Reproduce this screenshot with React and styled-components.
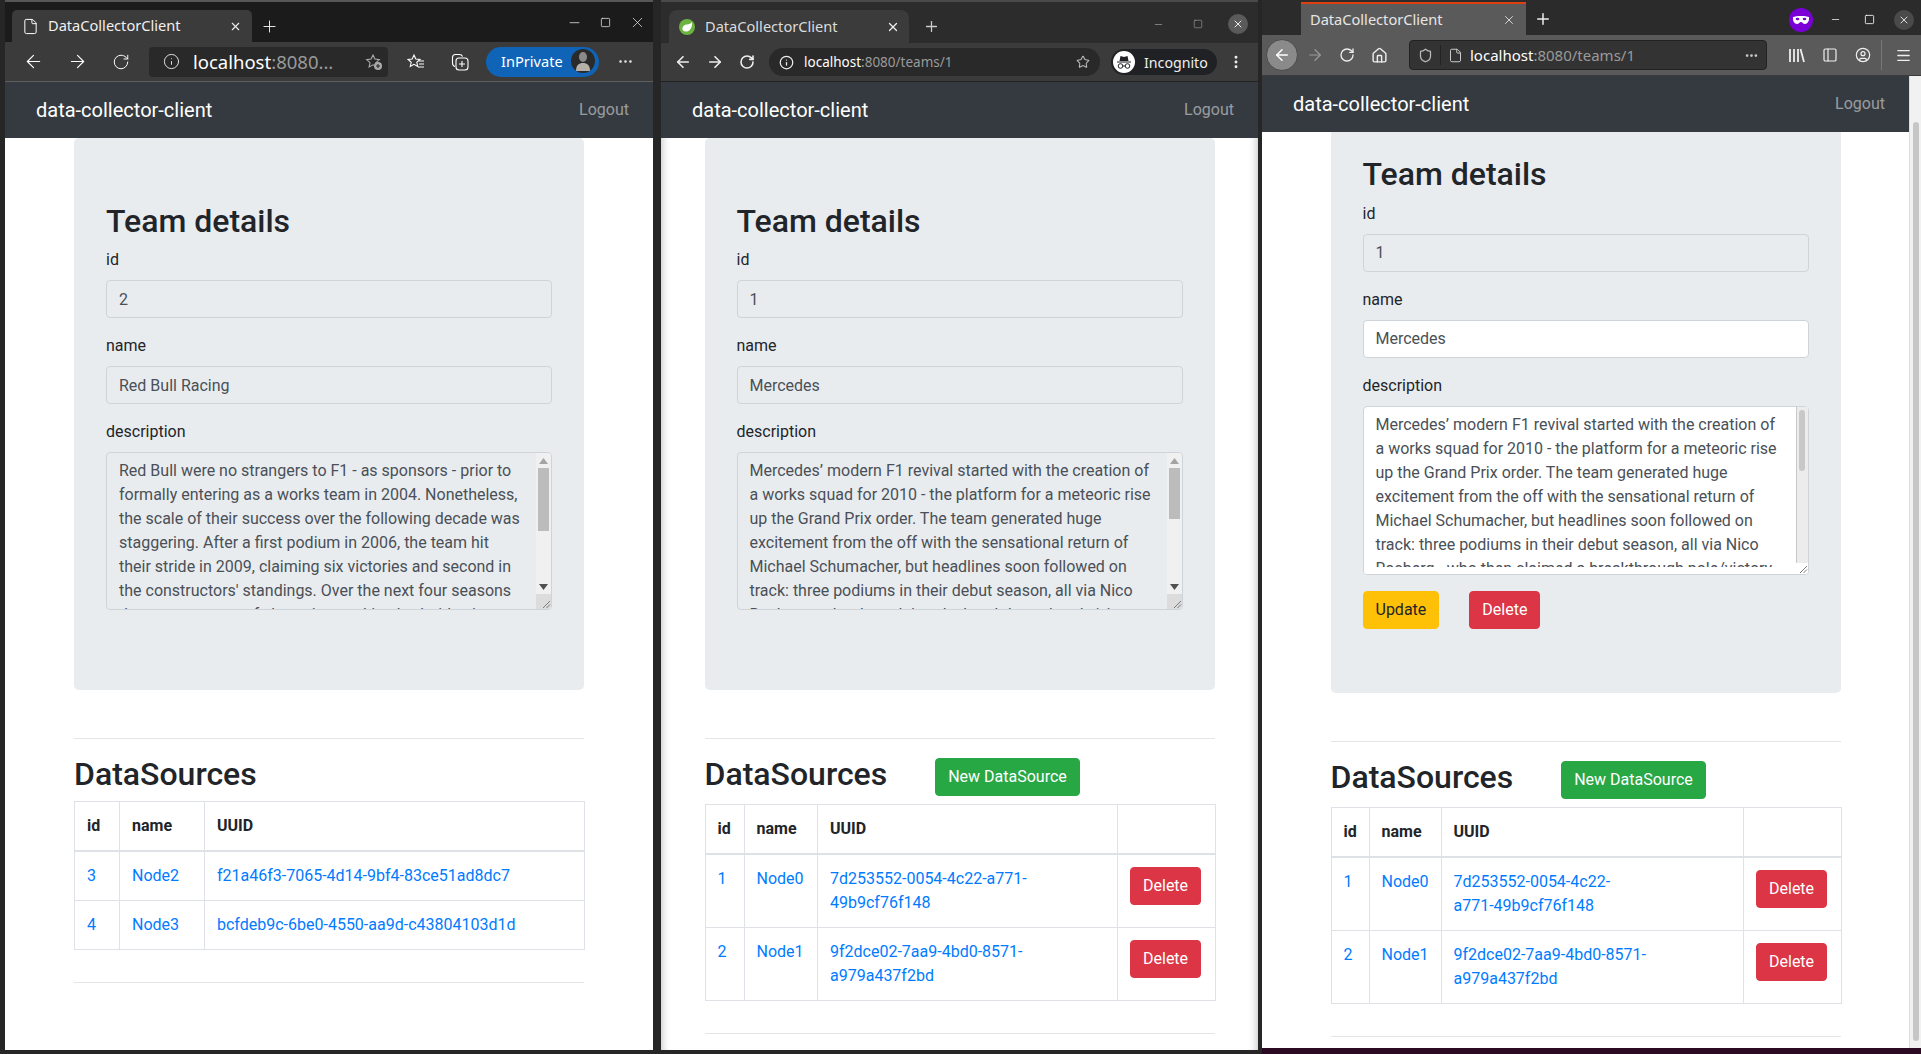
import React from 'react';
import styled, { createGlobalStyle } from 'styled-components';
import {
  ArrowLeft, ArrowRight, RotateCw, Info, Star, File, X, Plus, Minus, Square, MoreHorizontal,
  MoreVertical, Shield, Home, Menu, PanelLeft, CircleUser,
} from 'lucide-react';

const redBullText = "Red Bull were no strangers to F1 - as sponsors - prior to formally entering as a works team in 2004. Nonetheless, the scale of their success over the following decade was staggering. After a first podium in 2006, the team hit their stride in 2009, claiming six victories and second in the constructors' standings. Over the next four seasons they were a team of champions, taking both titles in every year and setting new records along the way, a run of form few teams have matched since then.";
const mercedesText = "Mercedes’ modern F1 revival started with the creation of a works squad for 2010 - the platform for a meteoric rise up the Grand Prix order. The team generated huge excitement from the off with the sensational return of Michael Schumacher, but headlines soon followed on track: three podiums in their debut season, all via Nico Rosberg - who then claimed a breakthrough pole/victory double in China in 2012, the first of many for the team. Lewis Hamilton joined a year later and the squad took a further step, winning races and starting to look like the next great force in the sport.";

const GlobalStyle = createGlobalStyle`
  html, body { margin: 0; padding: 0; background: #2c0a24; overflow: hidden; }
  * { box-sizing: border-box; }
`;

const App = () => (
  <Screen>
    <GlobalStyle />
    <Window $width={660} $pad="0 7px 4px 5px" $height={1054}>
      <EdgeChrome />
      <TeamPage
        id="2" name="Red Bull Racing" text={redBullText} topPad={63.6} thumb={63}
        cols={[45, 85, 380]}
        rows={[
          { id: 3, name: 'Node2', uuid: ['f21a46f3-7065-4d14-9bf4-83ce51ad8dc7'] },
          { id: 4, name: 'Node3', uuid: ['bcfdeb9c-6be0-4550-aa9d-c43804103d1d'] },
        ]}
      />
    </Window>
    <Window $width={602} $pad="0 4px 4px 1px" $height={1054}>
      <ChromeChrome />
      <TeamPage
        id="1" name="Mercedes" text={mercedesText} topPad={63.6} thumb={51} canCreate shaded
        cols={[39, 73.5, 300, 97.5]}
        rows={[
          { id: 1, name: 'Node0', uuid: ['7d253552-0054-4c22-a771-', '49b9cf76f148'] },
          { id: 2, name: 'Node1', uuid: ['9f2dce02-7aa9-4bd0-8571-', 'a979a437f2bd'] },
        ]}
      />
    </Window>
    <Window $width={659} $pad="0" $height={1048}>
      <FirefoxChrome />
      <PageRow>
        <TeamPage
          id="1" name="Mercedes" text={mercedesText} topPad={23.4} canCreate canEdit
          cols={[38, 72, 302.5, 97.5]}
          rows={[
            { id: 1, name: 'Node0', uuid: ['7d253552-0054-4c22-', 'a771-49b9cf76f148'] },
            { id: 2, name: 'Node1', uuid: ['9f2dce02-7aa9-4bd0-8571-', 'a979a437f2bd'] },
          ]}
        />
        <PageScrollbar><PageThumb /></PageScrollbar>
      </PageRow>
    </Window>
  </Screen>
);

const TeamPage = ({ id, name, text, topPad, thumb, cols, rows, canCreate, canEdit, shaded }) => (
  <Page $shaded={shaded}>
    <Navbar>
      <Brand>data-collector-client</Brand>
      <NavLink>Logout</NavLink>
    </Navbar>
    <Container>
      <Jumbotron $top={topPad} $flat={canEdit}>
        <Heading>Team details</Heading>
        <Form>
          <FormGroup>
            <Label>id</Label>
            <Input readOnly value={id} />
          </FormGroup>
          <FormGroup>
            <Label>name</Label>
            <Input readOnly={!canEdit} $editable={canEdit} value={name} onChange={() => {}} />
          </FormGroup>
          <FormGroup>
            <Label>description</Label>
            <TextAreaFrame>
              <TextArea
                readOnly={!canEdit} $editable={canEdit} $height={canEdit ? 169 : 158}
                value={text} onChange={() => {}}
              />
              {canEdit ? <SlimScrollbar /> : <ClassicScrollbar thumb={thumb} />}
            </TextAreaFrame>
          </FormGroup>
          {canEdit && (
            <Actions>
              <Button $kind="warning">Update</Button>
              <Button $kind="danger">Delete</Button>
            </Actions>
          )}
        </Form>
      </Jumbotron>
      <Rule />
      <SectionHead>
        <Heading>DataSources</Heading>
        {canCreate && <NewButton $kind="success">New DataSource</NewButton>}
      </SectionHead>
      <Table>
        <colgroup>
          {cols.map((w, i) => <Col key={i} $w={w} />)}
        </colgroup>
        <thead>
          <tr>
            <Th>id</Th>
            <Th>name</Th>
            <Th>UUID</Th>
            {canCreate && <Th />}
          </tr>
        </thead>
        <tbody>
          {rows.map((r) => (
            <tr key={r.id}>
              <Td><Link>{r.id}</Link></Td>
              <Td><Link>{r.name}</Link></Td>
              <Td>
                {r.uuid.map((part) => <UuidLine key={part}>{part}</UuidLine>)}
              </Td>
              {canCreate && <Td><Button $kind="danger">Delete</Button></Td>}
            </tr>
          ))}
        </tbody>
      </Table>
      <Rule />
    </Container>
  </Page>
);

// the sandbox browser hides native scrollbars, so these sit over the textarea
const ClassicScrollbar = ({ thumb }) => (
  <ClassicTrack>
    <ScrollArrow>
      <svg width="9" height="6" viewBox="0 0 9 6"><path d="M4.500 0L9 6H0z" fill="#a3a3a3" /></svg>
    </ScrollArrow>
    <ClassicThumb $h={thumb} />
    <ScrollArrow>
      <svg width="9" height="6" viewBox="0 0 9 6"><path d="M4.500 6L9 0H0z" fill="#505050" /></svg>
    </ScrollArrow>
    <GripCorner $bg="#dcdcdc" $h={15}><GripIcon /></GripCorner>
  </ClassicTrack>
);

const SlimScrollbar = () => (
  <>
    <TextClip />
    <SlimTrack>
      <SlimRail><SlimThumb /></SlimRail>
      <GripCorner $bg="#fff" $h={11}><GripIcon /></GripCorner>
    </SlimTrack>
  </>
);

const GripIcon = () => (
  <svg width="11" height="11" viewBox="0 0 11 11" fill="none" stroke="#7a7a7a" strokeWidth="1">
    <path d="M10 3L3 10M10 6.500L6.500 10" />
  </svg>
);

const EdgeChrome = () => (
  <>
    <TabBar $h={42} $bg="#1b1b1b" $line="#565656">
      <Tab $w={240} $h={32} $ml={7} $bg="#3b3b3b" $radius={5}>
        <Slot $w={36} $c="#fff"><File size={17} strokeWidth={1.4} /></Slot>
        <TabTitle $c="#f0f0f0">DataCollectorClient</TabTitle>
        <Slot $w={34} $c="#eee"><X size={13} strokeWidth={2} /></Slot>
      </Tab>
      <Slot $w={34} $h={32} $c="#eee"><Plus size={19} strokeWidth={1.2} /></Slot>
      <Controls $top={4}>
        <Slot $w={32} $h={32} $c="#999"><Minus size={15} strokeWidth={2} /></Slot>
        <Slot $w={31} $h={32} $c="#eee"><Square size={11} strokeWidth={1.6} /></Slot>
        <Slot $w={32} $h={32} $c="#ddd"><X size={17} strokeWidth={1.1} /></Slot>
      </Controls>
    </TabBar>
    <Toolbar $h={40} $bg="#3b3b3b" $pl={6} $line="#5f5f5f">
      <Slot $w={44} $c="#fff"><ArrowLeft size={21} strokeWidth={1.3} /></Slot>
      <Slot $w={44} $c="#fff"><ArrowRight size={21} strokeWidth={1.3} /></Slot>
      <Slot $w={44} $c="#fff"><RotateCw size={18} strokeWidth={1.3} /></Slot>
      <UrlBox $w={239} $ml={6} $h={30} $bg="#292929" $radius={4}>
        <Slot $w={44} $c="#eee"><Info size={17} strokeWidth={1.3} /></Slot>
        <UrlText $size={18.5}>localhost<Dim>:8080...</Dim></UrlText>
        <Slot $w={28} $c="#aaa"><StarPlusIcon /></Slot>
      </UrlBox>
      <Slot $w={44} $ml={6} $c="#fff"><FavoritesIcon /></Slot>
      <Slot $w={44} $c="#fff"><CollectionsIcon /></Slot>
      <PrivatePill>
        InPrivate
        <AvatarIcon />
      </PrivatePill>
      <Slot $w={44} $ml={4} $c="#eee"><MoreHorizontal size={17} strokeWidth={1.6} /></Slot>
    </Toolbar>
  </>
);

const ChromeChrome = () => (
  <>
    <TabBar $h={43} $bg="#2c2c2c" $line="#4a4a4a">
      <Tab $w={240} $h={33} $ml={8} $bg="#3b3b3b" $radius={8}>
        <Slot $w={36} $c="#fff"><SpringIcon /></Slot>
        <TabTitle $c="#dcdcdc">DataCollectorClient</TabTitle>
        <Slot $w={32} $c="#eee"><X size={14} strokeWidth={2.2} /></Slot>
      </Tab>
      <Slot $w={44} $h={33} $c="#ccc"><Plus size={17} strokeWidth={1.8} /></Slot>
      <Controls $top={2}>
        <Slot $w={40} $h={40} $c="#aaa"><Minus size={11} strokeWidth={1.4} /></Slot>
        <Slot $w={40} $h={40} $c="#bbb"><Square size={10} strokeWidth={1.2} /></Slot>
        <Slot $w={40} $h={40} $c="#fff"><CloseCircle $bg="#5a5a5a" $size={20}><X size={12} strokeWidth={1.8} /></CloseCircle></Slot>
      </Controls>
    </TabBar>
    <Toolbar $h={39} $bg="#3b3b3b" $pl={6} $line="#222">
      <Slot $w={32} $c="#eee"><ArrowLeft size={18} strokeWidth={2.2} /></Slot>
      <Slot $w={32} $c="#eee"><ArrowRight size={18} strokeWidth={2.2} /></Slot>
      <Slot $w={32} $c="#eee"><RotateCw size={16} strokeWidth={2.4} /></Slot>
      <UrlBox $w={331} $ml={6} $h={28} $bg="#292929" $radius={14}>
        <Slot $w={35} $c="#eee"><Info size={15} strokeWidth={2} /></Slot>
        <UrlText $size={13.5}>localhost<Dim>:8080/teams/1</Dim></UrlText>
        <Slot $w={34} $c="#bbb"><Star size={14} strokeWidth={1.8} /></Slot>
      </UrlBox>
      <IncognitoPill>
        <IncognitoIcon />
        Incognito
      </IncognitoPill>
      <Slot $w={28} $ml={5} $c="#eee"><MoreVertical size={16} strokeWidth={2.4} /></Slot>
    </Toolbar>
  </>
);

const FirefoxChrome = () => (
  <>
    <TabBar $h={35} $bg="#2b2b2b" $line="#2b2b2b">
      <FirefoxTab>
        <TabTitle $c="#e6e6e6" $pl={9}>DataCollectorClient</TabTitle>
        <Slot $w={34} $c="#ddd"><X size={14} strokeWidth={1.6} /></Slot>
      </FirefoxTab>
      <Slot $w={34} $h={33} $c="#eee"><Plus size={18} strokeWidth={2} /></Slot>
      <Controls $top={1}>
        <Slot $w={34} $h={33} $c="#fff"><MaskIcon /></Slot>
        <Slot $w={34} $h={33} $c="#fff"><Minus size={11} strokeWidth={1.6} /></Slot>
        <Slot $w={34} $h={33} $c="#fff"><Square size={11} strokeWidth={1.8} /></Slot>
        <Slot $w={35} $h={33} $c="#fff"><CloseCircle $bg="#4a4a4a" $size={20}><X size={12} strokeWidth={1.6} /></CloseCircle></Slot>
      </Controls>
    </TabBar>
    <Toolbar $h={41} $bg="#5a5a5a" $pl={3} $line="#3a3a3a">
      <Slot $w={34} $c="#fff"><BackCircle><ArrowLeft size={18} strokeWidth={2} /></BackCircle></Slot>
      <Slot $w={32} $c="#9a9a9a"><ArrowRight size={18} strokeWidth={1.6} /></Slot>
      <Slot $w={32} $c="#eee"><RotateCw size={16} strokeWidth={2} /></Slot>
      <Slot $w={32} $c="#eee"><Home size={17} strokeWidth={2} /></Slot>
      <UrlBox $w={358} $ml={14} $h={30} $bg="#333" $radius={4} $border>
        <Slot $w={30} $c="#bbb"><Shield size={15} strokeWidth={2} /></Slot>
        <UrlSeparator />
        <Slot $w={29} $c="#ccc"><File size={15} strokeWidth={1.6} /></Slot>
        <UrlText $size={15}>localhost<Dim>:8080/teams/1</Dim></UrlText>
        <Slot $w={30} $c="#ccc"><MoreHorizontal size={15} strokeWidth={2.4} /></Slot>
      </UrlBox>
      <Slot $w={33} $ml={13} $c="#eee"><LibraryIcon /></Slot>
      <Slot $w={33} $c="#eee"><PanelLeft size={16} strokeWidth={1.8} /></Slot>
      <Slot $w={33} $c="#eee"><CircleUser size={16} strokeWidth={1.8} /></Slot>
      <ToolbarSeparator />
      <Slot $w={34} $ml={4} $c="#eee"><Menu size={17} strokeWidth={1.8} /></Slot>
    </Toolbar>
  </>
);

const StarPlusIcon = () => (
  <svg width="18" height="18" viewBox="0 0 18 18" fill="none" stroke="currentColor" strokeWidth="1.1">
    <path d="M8 2l1.9 4.1 4.4.5-3.3 3 .9 4.4L8 11.8l-3.9 2.2.9-4.4-3.3-3 4.4-.5z" />
    <circle cx="13" cy="13" r="4" fill="#aaa" stroke="none" />
    <path d="M13 11v4M11 13h4" stroke="#292929" />
  </svg>
);

const FavoritesIcon = () => (
  <svg width="18" height="18" viewBox="0 0 18 18" fill="none" stroke="currentColor" strokeWidth="1.1">
    <path d="M7 2l1.8 4 4.2.4-3.2 2.9.9 4.2L7 11.3l-3.7 2.2.9-4.2L1 6.4 5.2 6z" />
    <path d="M12 8h5M12 11h5M11 14h6" />
  </svg>
);

const CollectionsIcon = () => (
  <svg width="18" height="18" viewBox="0 0 18 18" fill="none" stroke="currentColor" strokeWidth="1.1">
    <path d="M4 13.5C2.5 13 1.5 12 1.5 10V4.500C1.500 2.500 2.500 1.500 4.500 1.500h4c1.500 0 2.500 .5 3 2" />
    <rect x="5" y="5" width="12" height="12" rx="3" />
    <path d="M11 8v6M8 11h6" />
  </svg>
);

const AvatarIcon = () => (
  <svg width="24" height="24" viewBox="0 0 24 24">
    <circle cx="12" cy="12" r="12" fill="#2a2a2a" />
    <ellipse cx="12" cy="8" rx="4" ry="5" fill="#8a8a8a" />
    <path d="M5 22c0-6 3-8 7-8s7 2 7 8z" fill="#b5b0a8" />
  </svg>
);

const SpringIcon = () => (
  <svg width="16" height="16" viewBox="0 0 16 16">
    <circle cx="8" cy="8" r="8" fill="#6cb33f" />
    <path d="M13 3c.5 4-1 8.500-5 9.500-2 .4-4-.5-4.500-2C3 8 5 5.500 8 5.500c2 0 4-1 5-2.500z" fill="#fff" />
  </svg>
);

const IncognitoIcon = () => (
  <svg width="22" height="22" viewBox="0 0 22 22">
    <circle cx="11" cy="11" r="11" fill="#fff" />
    <path d="M4 10.500h14v1H4zM6.500 10l1-5 3.500 1 3.500-1 1 5z" fill="#202124" />
    <circle cx="7.500" cy="15" r="2.300" fill="none" stroke="#202124" strokeWidth="1" />
    <circle cx="14.500" cy="15" r="2.300" fill="none" stroke="#202124" strokeWidth="1" />
    <path d="M9.800 15h2.400" stroke="#202124" strokeWidth="1" />
  </svg>
);

const MaskIcon = () => (
  <svg width="24" height="24" viewBox="0 0 24 24">
    <circle cx="12" cy="12" r="12" fill="#7a00d6" />
    <path d="M4 9c3-1.500 13-1.500 16 0 .5 4-1.500 7-4 7-2 0-2.500-2-4-2s-2 2-4 2c-2.500 0-4.500-3-4-7z" fill="#fff" />
    <ellipse cx="8.500" cy="11" rx="1.800" ry="1.300" fill="#7a00d6" />
    <ellipse cx="15.500" cy="11" rx="1.800" ry="1.300" fill="#7a00d6" />
  </svg>
);

const LibraryIcon = () => (
  <svg width="17" height="17" viewBox="0 0 17 17" fill="none" stroke="currentColor" strokeWidth="1.800">
    <path d="M2 2v13M6 2v13M10 2v13M12.500 2l3.500 13" />
  </svg>
);

const Screen = styled.div`
  display: flex;
  align-items: flex-start;
  width: 1921px;
  height: 1054px;
  overflow: hidden;
  background: #2c0a24;
`;

const Window = styled.div`
  display: flex;
  flex-direction: column;
  flex: none;
  width: ${(p) => p.$width}px;
  height: ${(p) => p.$height}px;
  padding: ${(p) => p.$pad};
  background: #262626;
  overflow: hidden;
`;

const TabBar = styled.div`
  display: flex;
  flex: none;
  align-items: flex-end;
  height: ${(p) => p.$h}px;
  background: ${(p) => p.$bg};
  border-top: 2px solid ${(p) => p.$line};
  font-family: "Noto Sans", sans-serif;
`;

const Tab = styled.div`
  display: flex;
  align-items: center;
  flex: none;
  width: ${(p) => p.$w}px;
  height: ${(p) => p.$h}px;
  margin-left: ${(p) => p.$ml}px;
  background: ${(p) => p.$bg};
  border-radius: ${(p) => p.$radius}px ${(p) => p.$radius}px 0 0;
`;

const FirefoxTab = styled.div`
  display: flex;
  align-items: center;
  flex: none;
  width: 225px;
  height: 33px;
  margin-left: 39px;
  background: #5a5a5a;
  border-top: 2px solid #e0400f;
`;

const TabTitle = styled.span`
  flex: 1;
  padding-left: ${(p) => p.$pl || 0}px;
  padding-bottom: 2px;
  font-size: 14.6px;
  color: ${(p) => p.$c};
  white-space: nowrap;
`;

const Controls = styled.div`
  display: flex;
  align-items: center;
  align-self: flex-start;
  margin-left: auto;
  margin-top: ${(p) => p.$top}px;
`;

const Slot = styled.span`
  display: inline-flex;
  flex: none;
  align-items: center;
  justify-content: center;
  width: ${(p) => p.$w}px;
  height: ${(p) => (p.$h ? `${p.$h}px` : 'auto')};
  margin-left: ${(p) => p.$ml || 0}px;
  color: ${(p) => p.$c};
`;

const CloseCircle = styled.span`
  display: inline-flex;
  align-items: center;
  justify-content: center;
  width: ${(p) => p.$size}px;
  height: ${(p) => p.$size}px;
  border-radius: 50%;
  background: ${(p) => p.$bg};
`;

const BackCircle = styled.span`
  display: inline-flex;
  align-items: center;
  justify-content: center;
  width: 32px;
  height: 32px;
  border-radius: 50%;
  background: #8a8a8a;
  border: 1px solid #4a4a4a;
`;

const Toolbar = styled.div`
  display: flex;
  flex: none;
  align-items: center;
  height: ${(p) => p.$h}px;
  padding-left: ${(p) => p.$pl}px;
  background: ${(p) => p.$bg};
  border-bottom: 1px solid ${(p) => p.$line};
  font-family: "Noto Sans", sans-serif;
`;

const UrlBox = styled.div`
  display: flex;
  flex: none;
  align-items: center;
  width: ${(p) => p.$w}px;
  height: ${(p) => p.$h}px;
  margin-left: ${(p) => p.$ml}px;
  background: ${(p) => p.$bg};
  border-radius: ${(p) => p.$radius}px;
  border: ${(p) => (p.$border ? '1px solid #222' : 'none')};
`;

const UrlText = styled.span`
  flex: 1;
  padding-bottom: 1px;
  font-size: ${(p) => p.$size}px;
  color: #fff;
  white-space: nowrap;
`;

const Dim = styled.span`
  color: #9a9a9a;
`;

const UrlSeparator = styled.span`
  width: 1px;
  height: 20px;
  background: #222;
`;

const ToolbarSeparator = styled.span`
  width: 1px;
  height: 30px;
  margin-left: 2px;
  background: #777;
`;

const PrivatePill = styled.div`
  display: flex;
  flex: none;
  align-items: center;
  justify-content: space-between;
  width: 113px;
  height: 30px;
  margin-left: 4px;
  padding: 0 4px 1px 15px;
  border-radius: 15px;
  background: #0f64b8;
  color: #fff;
  font-size: 14.6px;
`;

const IncognitoPill = styled.div`
  display: flex;
  flex: none;
  align-items: center;
  gap: 9px;
  width: 106px;
  height: 26px;
  margin-left: 11px;
  padding-left: 2px;
  border-radius: 13px;
  background: #202124;
  color: #eee;
  font-size: 14.200px;
`;

const PageRow = styled.div`
  display: flex;
  flex: 1;
  min-height: 0;
`;

const PageScrollbar = styled.div`
  flex: none;
  width: 12px;
  padding: 46px 2px 0 3px;
  background: #f1f1f1;
  border-left: 1px solid #ddd;
`;

const PageThumb = styled.div`
  height: 919px;
  border-radius: 4px;
  background: #c6c6c6;
`;

const Page = styled.div`
  flex: 1;
  min-width: 0;
  min-height: 0;
  overflow: hidden;
  background: #fff;
  color: #212529;
  font-family: Roboto, sans-serif;
  font-size: 16px;
  line-height: 24px;
  box-shadow: ${(p) => (p.$shaded ? 'inset 9px 0 8px -8px rgba(0,0,0,.25), inset -9px 0 8px -8px rgba(0,0,0,.25)' : 'none')};
`;

const Navbar = styled.nav`
  display: flex;
  align-items: center;
  justify-content: space-between;
  height: 56px;
  padding: 0 24px 0 31px;
  background: #343a40;
`;

const Brand = styled.span`
  font-size: 20px;
  color: #fff;
`;

const NavLink = styled.span`
  color: rgba(255, 255, 255, 0.5);
`;

const Container = styled.div`
  display: flex;
  flex-direction: column;
  width: 510px;
  margin: 0 auto;
`;

const Jumbotron = styled.div`
  padding: ${(p) => p.$top}px 32px 32px;
  margin-bottom: 32px;
  background: #e9ecef;
  border-radius: ${(p) => (p.$flat ? '0 0 4.8px 4.8px' : '4.8px')};
`;

const Heading = styled.h2`
  margin: 0 0 8px;
  font-size: 32px;
  font-weight: 500;
  line-height: 38.4px;
`;

const Form = styled.form`
  padding-bottom: 32px;
`;

const FormGroup = styled.div`
  margin-bottom: 16px;
`;

const Label = styled.label`
  display: block;
  margin-bottom: 8px;
`;

const Input = styled.input`
  display: block;
  width: 100%;
  height: 38px;
  padding: 6px 12px;
  font: inherit;
  color: #495057;
  background: ${(p) => (p.$editable ? '#fff' : '#e9ecef')};
  border: 1px solid #ced4da;
  border-radius: 4px;
  outline: none;
`;

const TextAreaFrame = styled.div`
  position: relative;
`;

const TextArea = styled.textarea`
  display: block;
  width: 100%;
  height: ${(p) => p.$height}px;
  padding: 6px ${(p) => (p.$editable ? 24 : 27)}px 6px 12px;
  font: inherit;
  color: #495057;
  background: ${(p) => (p.$editable ? '#fff' : '#e9ecef')};
  border: 1px solid #ced4da;
  border-radius: 4px;
  outline: none;
  overflow: hidden;
  resize: none;
`;

const ClassicTrack = styled.div`
  position: absolute;
  top: 1px;
  right: 1px;
  bottom: 1px;
  display: flex;
  flex-direction: column;
  width: 15px;
  background: #f0f0f0;
  border-radius: 0 3px 3px 0;
`;

const ScrollArrow = styled.div`
  display: flex;
  flex: none;
  align-items: center;
  justify-content: center;
  height: 15px;
`;

const ClassicThumb = styled.div`
  flex: none;
  width: 11px;
  height: ${(p) => p.$h}px;
  margin: 0 2px auto;
  background: #bcbcbc;
`;

const GripCorner = styled.div`
  display: flex;
  flex: none;
  align-items: flex-end;
  justify-content: flex-end;
  height: ${(p) => p.$h}px;
  background: ${(p) => p.$bg};
  border-radius: 0 0 3px 0;
`;

const TextClip = styled.div`
  position: absolute;
  left: 1px;
  right: 13px;
  bottom: 1px;
  height: 7px;
  background: #fff;
  border-radius: 0 0 0 3px;
`;

const SlimTrack = styled.div`
  position: absolute;
  top: 1px;
  right: 1px;
  bottom: 1px;
  display: flex;
  flex-direction: column;
  width: 12px;
`;

const SlimRail = styled.div`
  flex: 1;
  padding: 3px 3px 0 2px;
  background: #ececec;
  border-left: 1px solid #c8c8c8;
`;

const SlimThumb = styled.div`
  height: 61px;
  border-radius: 3px;
  background: #c8c8c8;
`;

const Actions = styled.div`
  display: flex;
  gap: 30px;
`;

const kinds = {
  warning: { bg: '#ffc107', fg: '#212529' },
  danger: { bg: '#dc3545', fg: '#fff' },
  success: { bg: '#28a745', fg: '#fff' },
};

const Button = styled.button.attrs({ type: 'button' })`
  height: 38px;
  padding: 6px 12px;
  font: inherit;
  color: ${(p) => kinds[p.$kind].fg};
  background: ${(p) => kinds[p.$kind].bg};
  border: 1px solid ${(p) => kinds[p.$kind].bg};
  border-radius: 4px;
`;

const NewButton = styled(Button)`
  margin: 3px 0 8px 48px;
`;

const Rule = styled.hr`
  flex: none;
  width: 100%;
  margin: 16px 0;
  height: 1px;
  border: 0;
  background: #e4e5e6;
`;

const SectionHead = styled.div`
  display: flex;
  align-items: flex-start;
`;

const Table = styled.table`
  width: 100%;
  margin-bottom: 16px;
  border-collapse: collapse;
  table-layout: fixed;
`;

const Col = styled.col`
  width: ${(p) => p.$w}px;
`;

const Th = styled.th`
  padding: 12px;
  text-align: left;
  font-weight: 700;
  border: 1px solid #dee2e6;
  border-bottom-width: 2px;
`;

const Td = styled.td`
  padding: 12px;
  vertical-align: top;
  border: 1px solid #dee2e6;
`;

const Link = styled.a`
  color: #007bff;
`;

const UuidLine = styled(Link)`
  display: block;
  white-space: nowrap;
`;

export default App;
